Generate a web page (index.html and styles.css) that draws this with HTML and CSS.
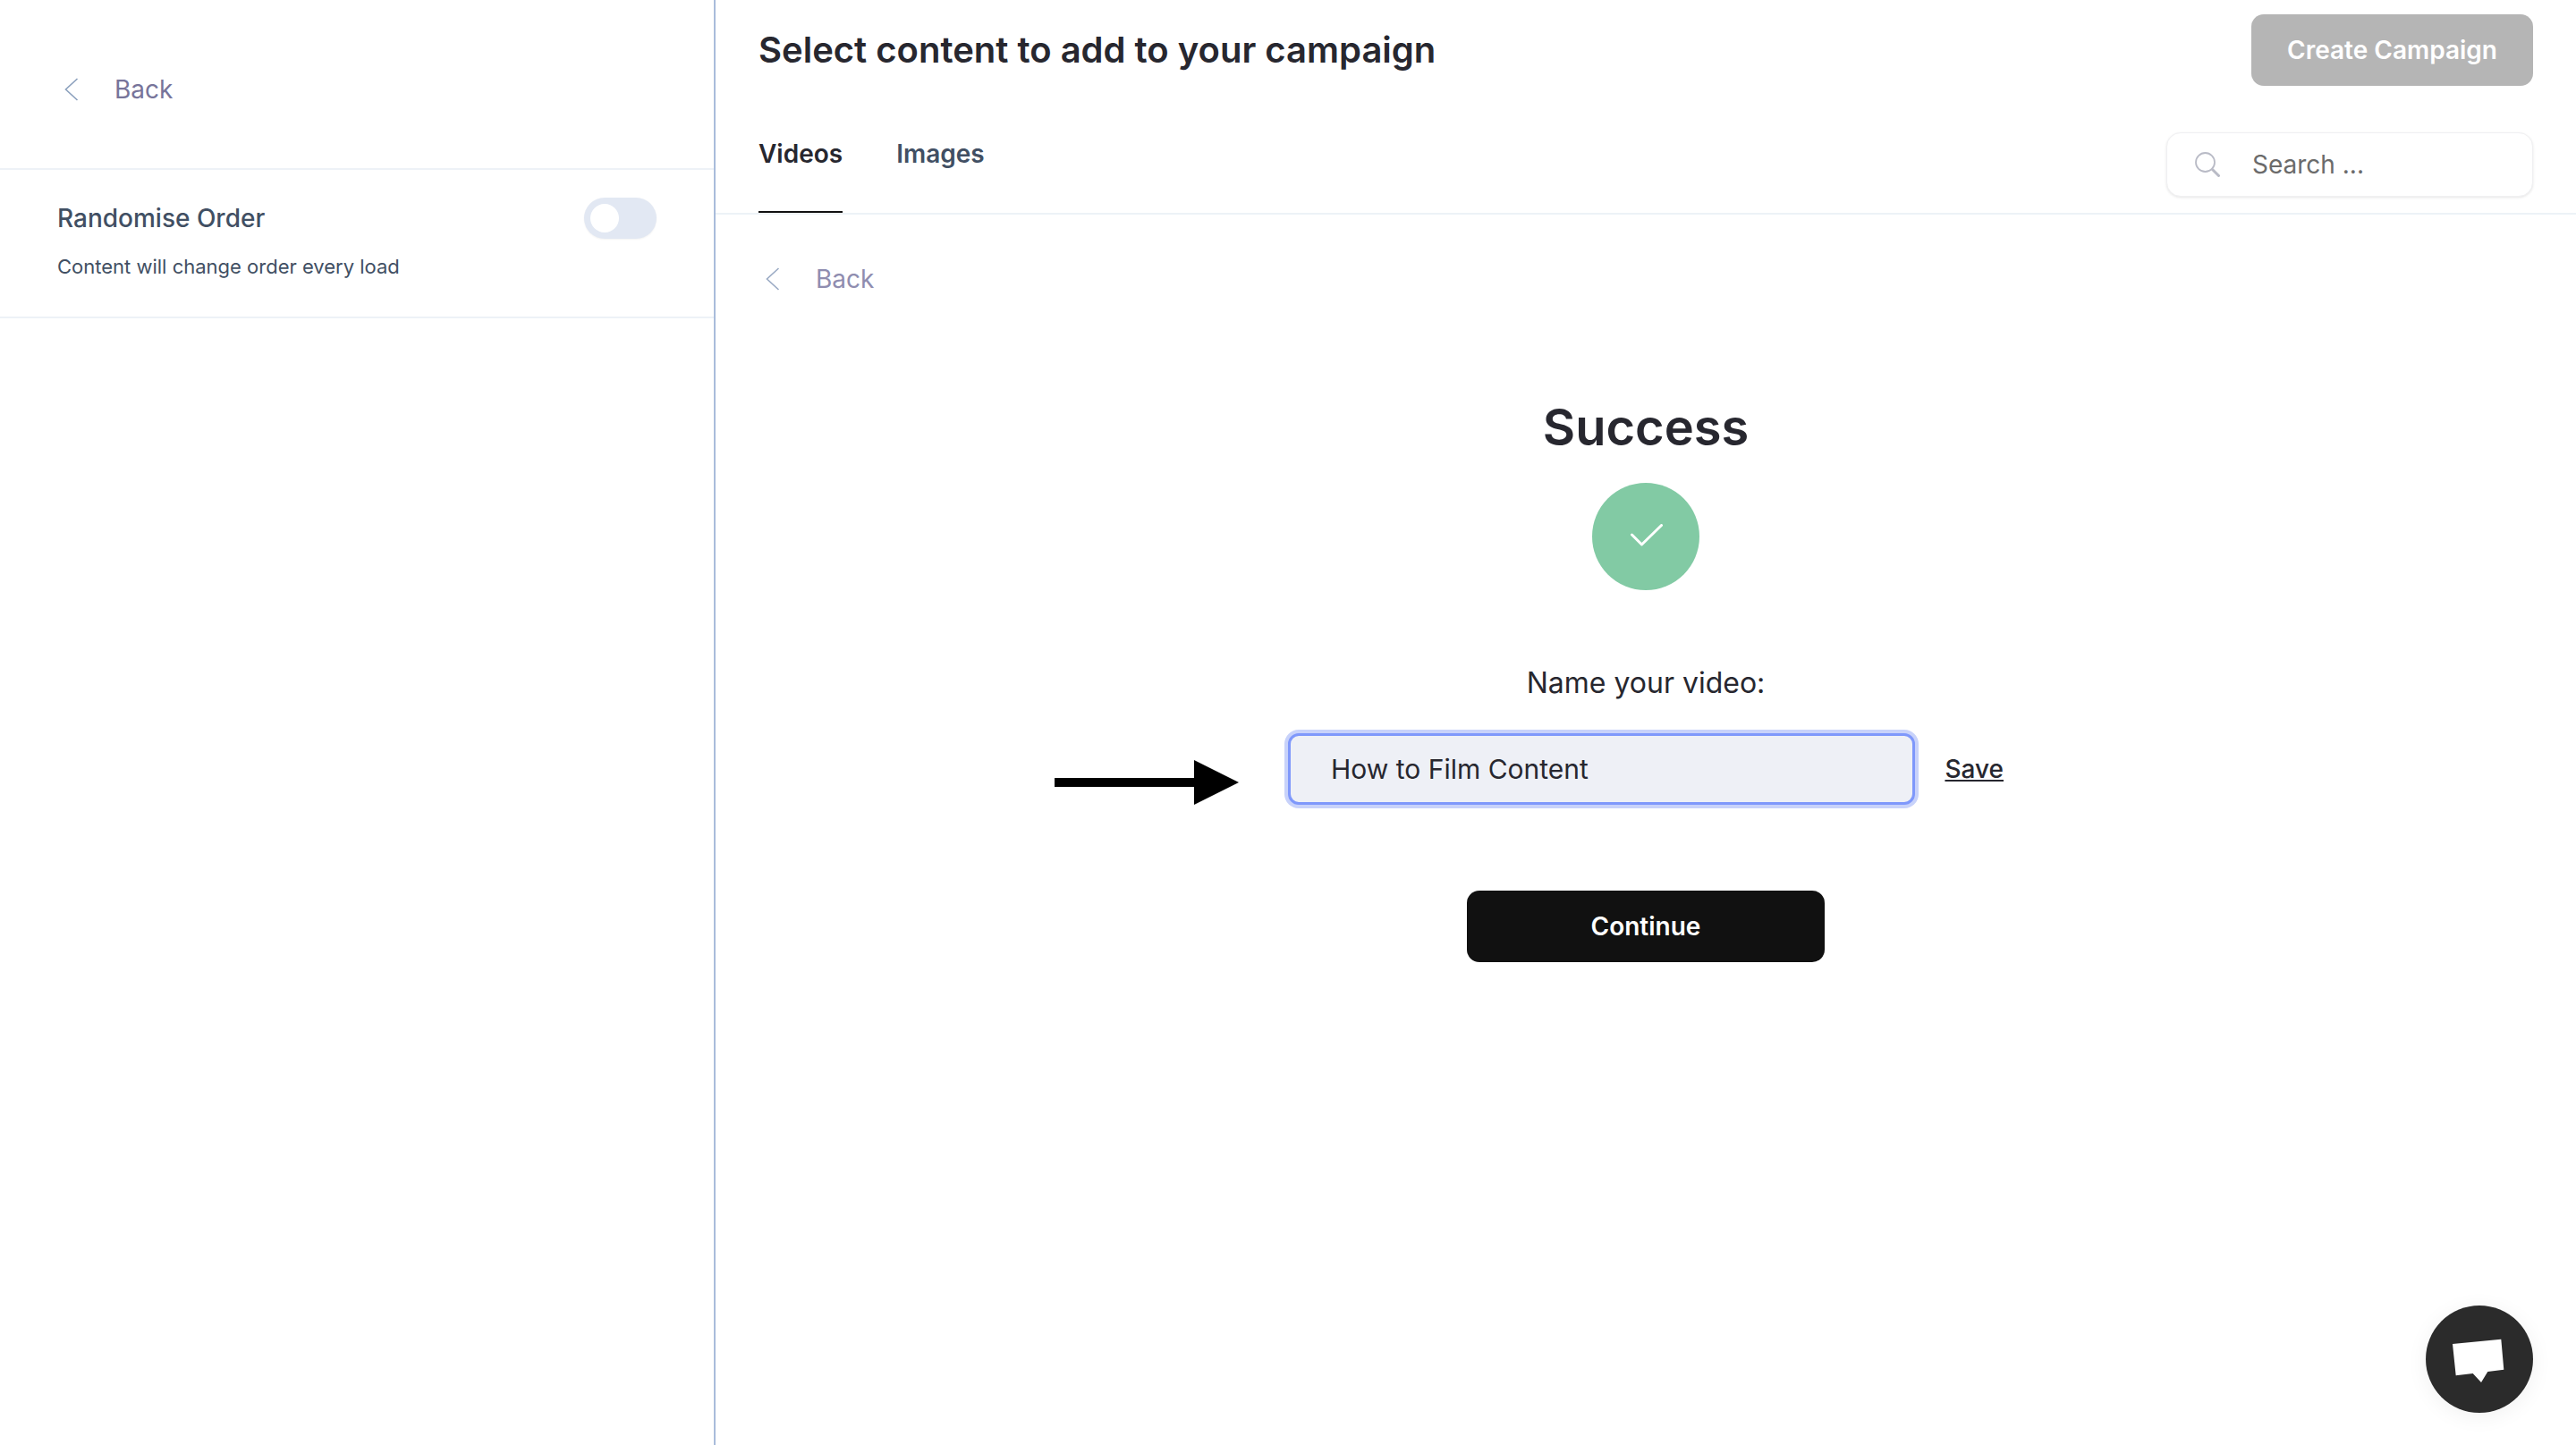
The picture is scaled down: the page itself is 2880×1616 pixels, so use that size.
FILE: index.html
```html
<!DOCTYPE html>
<html lang="en">
<head>
<meta charset="utf-8">
<title>Select content to add to your campaign</title>
<link rel="stylesheet" href="styles.css">
</head>
<body>
<div class="app">
  <aside class="sidebar">
    <a class="back back-side">
      <svg class="chevron" viewBox="0 0 16 26"><path d="M14.5 1 L1.5 13 L14.5 25"/></svg>
      <span>Back</span>
    </a>
    <section class="option">
      <div class="option-head">
        <span class="option-title">Randomise Order</span>
        <span class="toggle"><span class="knob"></span></span>
      </div>
      <p class="option-desc">Content will change order every load</p>
    </section>
  </aside>
  <main class="main">
    <div class="topbar">
      <h1 class="title">Select content to add to your campaign</h1>
      <button class="create">Create Campaign</button>
    </div>
    <div class="tabbar">
      <nav class="tabs">
        <a class="tab tab-active">Videos</a>
        <a class="tab">Images</a>
      </nav>
      <div class="search">
        <svg class="search-icon" viewBox="0 0 28 28"><circle cx="11.5" cy="11.5" r="10.5"/><path class="handle" d="M19.5 19.5 L26.5 26.5"/></svg>
        <span class="search-text">Search ...</span>
      </div>
    </div>
    <div class="content">
      <a class="back back-main">
        <svg class="chevron" viewBox="0 0 16 26"><path d="M14.5 1 L1.5 13 L14.5 25"/></svg>
        <span>Back</span>
      </a>
      <div class="success">
        <h2 class="success-title">Success</h2>
        <div class="success-badge">
          <svg class="check" viewBox="0 0 36 25"><path d="M1.5 12 L12.5 23 L34.5 1.5"/></svg>
        </div>
        <p class="name-label">Name your video:</p>
        <div class="name-row">
          <svg class="arrow" viewBox="0 0 206 50"><path d="M0 20 H156 V0 L206 25 L156 50 V30 H0 Z"/></svg>
          <div class="name-input">How to Film Content</div>
          <a class="save">Save</a>
        </div>
        <button class="continue">Continue</button>
      </div>
    </div>
  </main>
</div>
<button class="chat" aria-label="Chat">
  <svg viewBox="0 0 120 120"><path d="M30 43 L84.3 37.7 L87.3 71.7 L69.3 74 L62 86 L52.7 76 L33.7 78.3 Z"/></svg>
</button>
</body>
</html>
```
FILE: styles.css
```css
* { box-sizing: border-box; }
html, body { margin: 0; height: 100%; }
body {
  font-family: Inter, "Liberation Sans", sans-serif;
  color: #27272f;
  background: #fff;
  overflow: hidden;
}
.app { display: flex; height: 100vh; }

.sidebar {
  width: 800px;
  flex: none;
  border-right: 2px solid #a9bcdb;
}
.back {
  display: flex;
  align-items: center;
  font-size: 28px;
  line-height: 36px;
}
.chevron { width: 16px; height: 26px; flex: none; }
.chevron path { fill: none; stroke-width: 1.6; }
.back-side {
  height: 190px;
  padding: 11px 0 0 72px;
  gap: 40px;
  color: #77749a;
  border-bottom: 2px solid #edf2f7;
}
.back-side .chevron path { stroke: #8ba0bd; }
.back-main {
  padding-left: 56px;
  gap: 40px;
  height: 48px;
  margin-top: 48px;
  color: #8f8db0;
}
.back-main .chevron path { stroke: #9aaac4; }

.option {
  height: 166px;
  padding: 31px 64px 0;
  border-bottom: 2px solid #edf2f7;
}
.option-head {
  display: flex;
  justify-content: space-between;
  align-items: center;
  height: 46px;
}
.option-title { font-size: 28px; font-weight: 500; color: #414f63; }
.toggle {
  width: 81px;
  height: 46px;
  padding: 7px;
  border-radius: 23px;
  background: #e2e8f3;
  box-shadow: 0 1px 2px rgba(0, 0, 0, 0.05);
  flex: none;
}
.knob { display: block; width: 32px; height: 32px; border-radius: 50%; background: #fff; }
.option-desc {
  margin: 16px 0 0;
  font-size: 22px;
  line-height: 30px;
  color: #414f63;
}

.main { flex: 1; display: flex; flex-direction: column; min-width: 0; }
.topbar {
  display: flex;
  justify-content: space-between;
  align-items: center;
  padding: 16px 48px 0;
}
.title { margin: 0; font-size: 40px; line-height: 80px; font-weight: 600; color: #27272f; }
.create {
  width: 315px;
  height: 80px;
  border: 0;
  border-radius: 14px;
  background: #b5b5b5;
  color: #fff;
  font: 600 28px Inter, sans-serif;
}
.tabbar {
  display: flex;
  justify-content: space-between;
  align-items: flex-end;
  height: 144px;
  padding: 0 48px 18px;
  border-bottom: 2px solid #edf2f7;
}
.tabs { display: flex; gap: 60px; align-self: stretch; margin-bottom: -18px; }
.tab {
  padding-top: 58px;
  font-size: 28px;
  line-height: 36px;
  font-weight: 600;
  color: #414f63;
  height: 142px;
  border-bottom: 2px solid transparent;
}
.tab-active { color: #27272f; border-bottom-color: #111; }
.search {
  display: flex;
  align-items: center;
  width: 410px;
  height: 72px;
  padding-left: 31px;
  gap: 36px;
  border: 1px solid #f0f0f2;
  border-radius: 16px;
  background: #fff;
  box-shadow: 0 1px 3px rgba(0, 0, 0, 0.1);
}
.search-icon { width: 28px; height: 28px; flex: none; }
.search-icon circle { fill: none; stroke: #b9bbc6; stroke-width: 1.8; }
.search-icon .handle { stroke: #b9bbc6; stroke-width: 3; stroke-linecap: round; }
.search-text { font-size: 28px; color: #6b6b6b; }

.content { flex: 1; }
.success { display: flex; flex-direction: column; align-items: center; }
.success-title {
  margin: 108px 0 0;
  font-size: 56px;
  line-height: 68px;
  font-weight: 600;
  color: #27272f;
}
.success-badge {
  width: 120px;
  height: 120px;
  margin-top: 28px;
  border-radius: 50%;
  background: #82caa4;
  display: flex;
  align-items: center;
  justify-content: center;
}
.check { width: 36px; height: 25px; margin: 0 0 3px 2px; }
.check path { fill: none; stroke: #fff; stroke-width: 3; stroke-linecap: round; stroke-linejoin: round; }
.name-label { margin: 84px 0 0; font-size: 32px; line-height: 40px; color: #27272f; }
.name-row {
  position: relative;
  display: flex;
  align-items: center;
  gap: 33px;
  width: 800px;
  margin-top: 36px;
}
.arrow { position: absolute; left: -261px; top: 30px; width: 206px; height: 50px; }
.arrow path { fill: #000; }
.name-input {
  width: 702px;
  height: 80px;
  display: flex;
  align-items: center;
  padding-left: 45px;
  border: 3px solid #7f98fb;
  border-radius: 12px;
  background: #eef0f6;
  box-shadow: 0 0 0 4px #c8d2fa;
  font-size: 30px;
  color: #27272f;
}
.save { font-size: 28px; font-weight: 500; color: #27272f; text-decoration: underline; }
.continue {
  width: 400px;
  height: 80px;
  margin-top: 96px;
  border: 0;
  border-radius: 14px;
  background: #111;
  color: #fff;
  font: 600 28px Inter, sans-serif;
}
.chat {
  position: fixed;
  right: 48px;
  bottom: 36px;
  width: 120px;
  height: 120px;
  padding: 0;
  border: 0;
  border-radius: 50%;
  background: #2b2b2b;
  box-shadow: 0 4px 24px rgba(0, 0, 0, 0.06);
}
.chat svg { display: block; width: 120px; height: 120px; }
.chat path { fill: #fff; }
```
